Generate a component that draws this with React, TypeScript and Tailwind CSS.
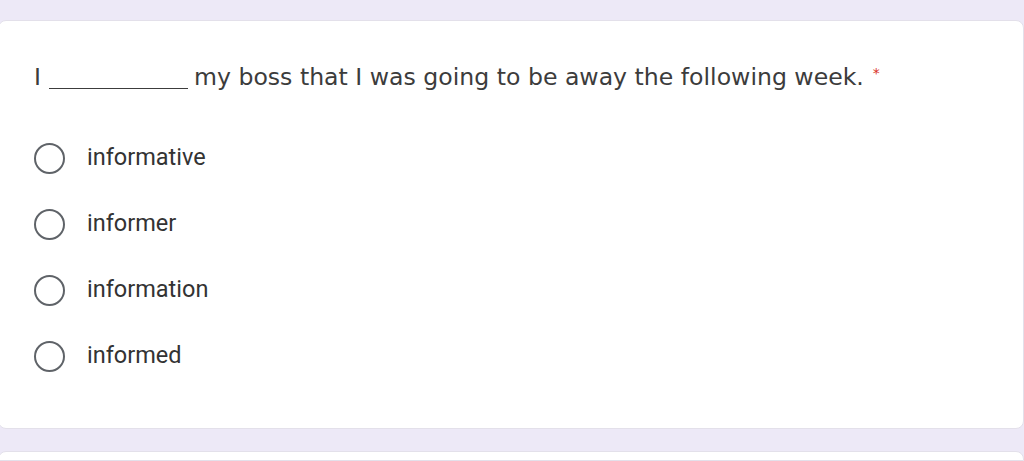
import React from "react";

const options = ["informative", "informer", "information", "informed"];

export default function App() {
  return (
    <div className="w-[1024px] h-[461px] overflow-hidden bg-[#ede9f7] flex flex-col">
      <div className="h-[20px] shrink-0" />
      <div className="h-[409px] shrink-0 bg-white rounded-[8px] border border-[#e3e0ea] ml-[-2px] pl-[35px] pt-[45px]">
        <div
          className="flex items-baseline h-[23px] text-[23.6px] text-[#3c3c3c] leading-none"
          style={{ fontFamily: '"DejaVu Sans", sans-serif' }}
        >
          <span>I</span>
          <span className="ml-[8px] inline-block w-[139px] border-b-[1.5px] border-[#3c3c3c] translate-y-[4px]" />
          <span className="ml-[6px]">my boss that I was going to be away the following week.</span>
          <span className="ml-[9px] text-[#d93025] text-[14px] self-start mt-[0px]">*</span>
        </div>
        <div className="mt-[54px] flex flex-col gap-[36px] pl-[2px]">
          {options.map((o) => (
            <div key={o} className="flex items-center h-[30px]">
              <div className="w-[31px] h-[31px] shrink-0 rounded-full border-[2.5px] border-[#5f6368] ml-[-2px]" />
              <span
                className="ml-[22px] text-[23.5px] text-[#333]"
                style={{ fontFamily: "Roboto, sans-serif" }}
              >
                {o}
              </span>
            </div>
          ))}
        </div>
      </div>
      <div className="h-[22px] shrink-0" />
      <div className="flex-1 bg-white rounded-t-[8px] border border-[#e3e0ea] ml-[-2px]" />
    </div>
  );
}
